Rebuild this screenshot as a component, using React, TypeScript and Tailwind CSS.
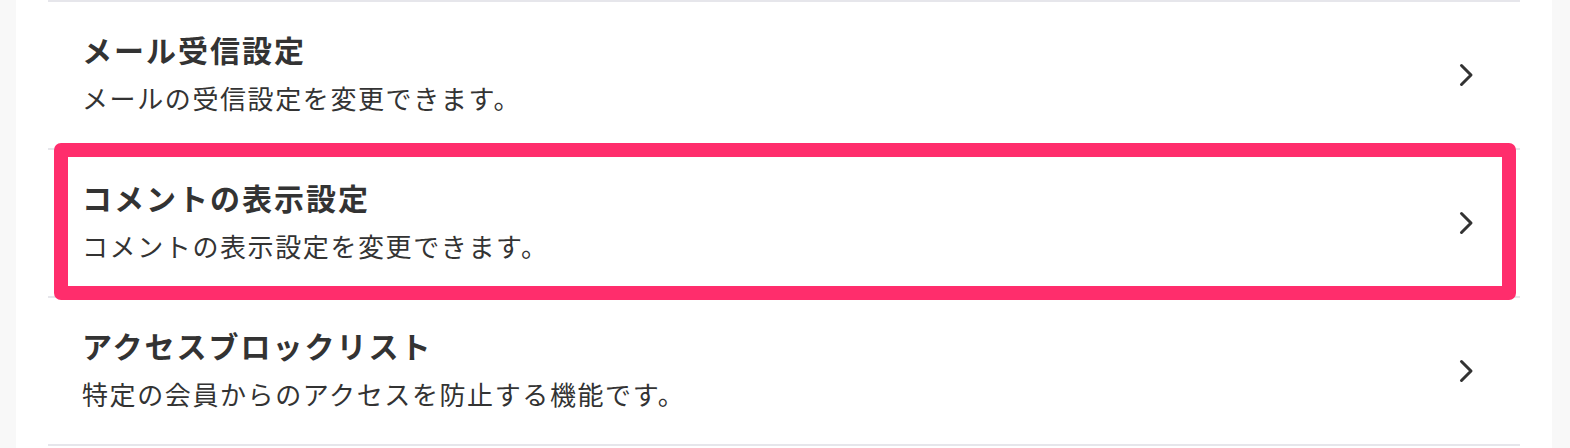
const items = [
  { title: "メール受信設定", description: "メールの受信設定を変更できます。" },
  { title: "コメントの表示設定", description: "コメントの表示設定を変更できます。", highlighted: true },
  { title: "アクセスブロックリスト", description: "特定の会員からのアクセスを防止する機能です。" },
]

function Chevron() {
  return (
    <svg width="16" height="24" viewBox="0 0 16 24" fill="none" className="shrink-0">
      <path d="M2.5 2.5 L12 12 L2.5 21.5" stroke="#333333" strokeWidth="3" strokeLinecap="round" strokeLinejoin="round" />
    </svg>
  )
}

export default function App() {
  return (
    <div
      className="flex h-[448px] w-full bg-[#f8f8f8] overflow-hidden"
      style={{ fontFamily: '"Noto Sans CJK JP", "Noto Sans", sans-serif' }}
    >
      <div className="w-4 shrink-0" />
      <div className="flex-1 bg-white">
        <div className="relative ml-8 w-[1472px] border-t-2 border-[#e6e6eb]">
          {items.map((item) => (
            <div
              key={item.title}
              className="flex h-[148px] items-center justify-between border-b-2 border-[#e6e6eb] pl-[34px] pr-[45px]"
            >
              <div className="flex flex-col gap-[10px] pb-1 text-[#333333]">
                <div className="text-[30px] font-bold leading-[40px] tracking-[2px]">{item.title}</div>
                <div className="text-[26px] leading-[38px] tracking-[1.6px]">{item.description}</div>
              </div>
              <Chevron />
            </div>
          ))}
          {/* 強調表示の枠 */}
          <div className="pointer-events-none absolute left-[6px] right-[4px] top-[141px] h-[157px] rounded-[7px] border-[14px] border-[#ff2d6c]" />
        </div>
      </div>
      <div className="w-[18px] shrink-0" />
    </div>
  )
}
